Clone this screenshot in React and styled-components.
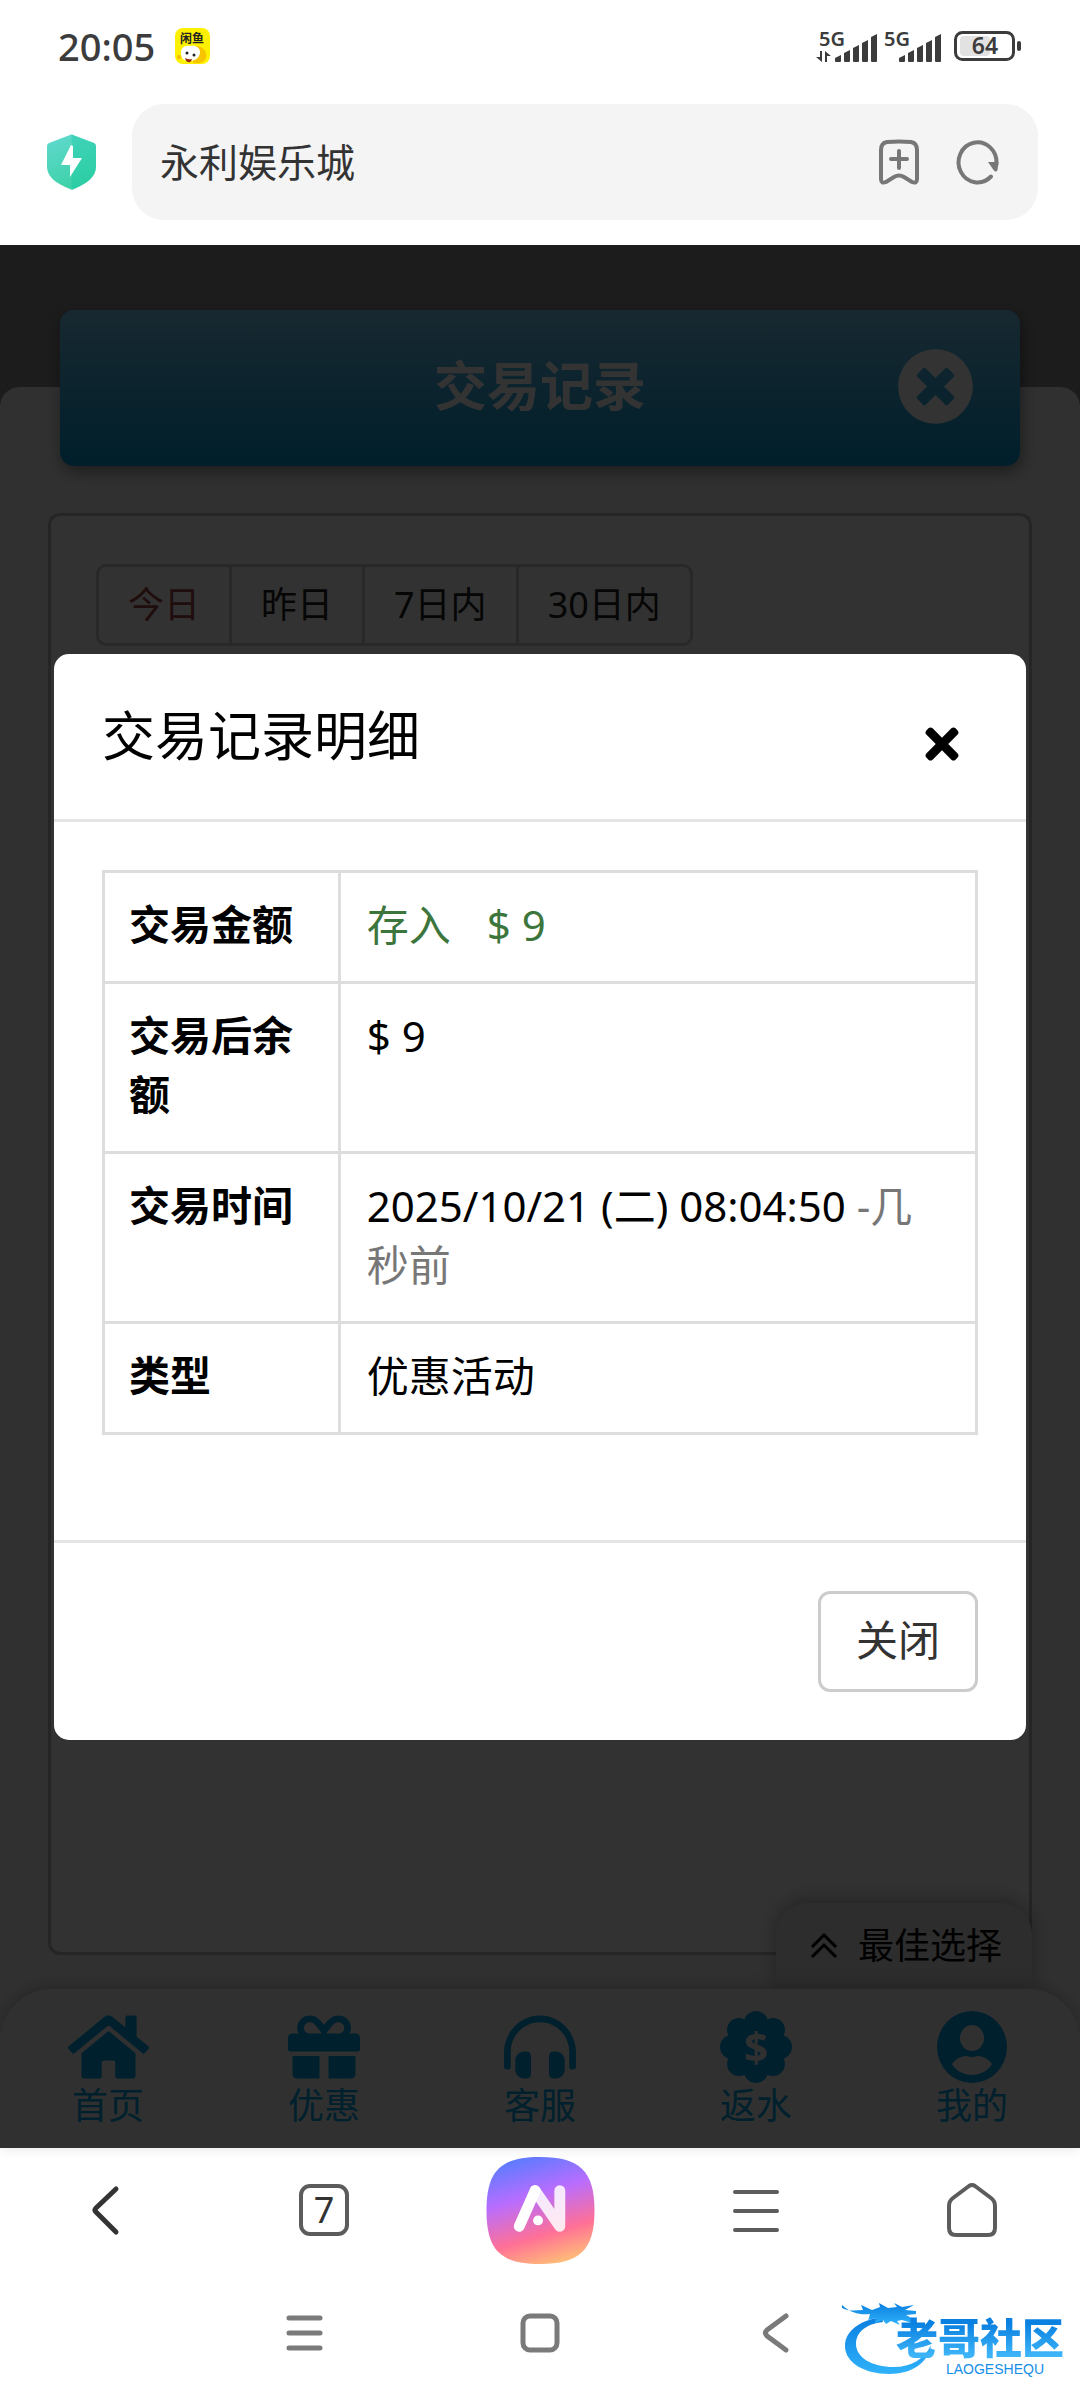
import React from "react";
import styled, { createGlobalStyle } from "styled-components";
import { FaGift, FaHeadphonesAlt, FaHome, FaTimes, FaTimesCircle } from "react-icons/fa";

const GlobalStyle = createGlobalStyle`
  * {
    box-sizing: border-box;
  }
  body {
    margin: 0;
    background: #fff;
    color: #000;
    font-family: "Noto Sans", "Noto Sans CJK SC", sans-serif;
    font-size: 42px;
  }
  button, input {
    font: inherit;
    color: inherit;
    margin: 0;
    padding: 0;
    border: 0;
    background: none;
  }
  svg {
    display: block;
    flex: none;
    overflow: visible;
  }
`;

const Screen = styled.div`
  display: flex;
  flex-direction: column;
  min-height: 100vh;
`;

/* phone status bar */

const StatusBar = styled.div`
  display: flex;
  align-items: center;
  height: 92px;
  padding: 0 58px;
  color: #3c3c3c;
`;

const Clock = styled.span`
  font-size: 38px;
  font-weight: 500;
  line-height: 48px;
  margin-right: 20px;
`;

const StatusIcons = styled.div`
  display: flex;
  align-items: center;
  gap: 6px;
  margin-left: auto;

  text {
    font-weight: 600;
    fill: #3c3c3c;
  }
`;

/* browser address bar */

const AddressRow = styled.div`
  display: flex;
  align-items: center;
  gap: 36px;
  padding: 12px 42px 25px 47px;
`;

const AddressBox = styled.div`
  flex: 1;
  display: flex;
  align-items: center;
  gap: 36px;
  height: 116px;
  padding: 0 38px 0 28px;
  border-radius: 32px;
  background: #f4f4f4;
  color: #777;
`;

const AddressInput = styled.input`
  flex: 1;
  min-width: 0;
  color: #333;
  font-size: 39px;
  line-height: 58px;
  outline: none;
`;

const IconButton = styled.button`
  display: flex;
  align-items: center;
  justify-content: center;
  cursor: pointer;
`;

/* web page */

const WebView = styled.main`
  position: relative;
  flex: 1;
  display: flex;
  flex-direction: column;
  background: #8c8c8c;
`;

const Sheet = styled.section`
  flex: 1;
  display: flex;
  flex-direction: column;
  margin-top: 142px;
  border-radius: 20px 20px 0 0;
  background: #f0f0f0;
`;

const TitleBar = styled.header`
  display: grid;
  grid-template-columns: 1fr auto 1fr;
  align-items: center;
  height: 156px;
  margin: -77px 60px 47px;
  padding: 0 46px 4px;
  border-radius: 14px;
  background: linear-gradient(#78c8f0, #009bd7);
  box-shadow: 2px 6px 16px rgba(0, 0, 0, 0.4);
  color: #fff;

  h1 {
    grid-column: 2;
    margin: 0;
    font-size: 53px;
    font-weight: 700;
    line-height: 70px;
  }
  button {
    justify-self: end;
    font-size: 77px;
  }
`;

const RecordBox = styled.div`
  flex: 1;
  margin: 0 48px 34px;
  padding: 48px 45px;
  border: 3px solid #b9b9b9;
  border-radius: 12px;
  background: #fafafa;
`;

const RangeTabs = styled.div`
  display: inline-flex;
  border: 3px solid #c8c8c8;
  border-radius: 10px;
`;

const RangeTab = styled.button`
  height: 76px;
  padding: 0 29px;
  font-size: 36px;
  line-height: 54px;
  color: ${(props) => (props.$active ? "#a04444" : "#222")};

  & + & {
    border-left: 3px solid #c8c8c8;
  }
`;

/* sits on the page, right above the bottom menu */
const BestPick = styled.button`
  position: absolute;
  right: 48px;
  bottom: 159px;
  display: flex;
  align-items: center;
  gap: 20px;
  height: 86px;
  padding: 0 30px 0 34px;
  border-radius: 32px 32px 0 0;
  background: #dedede;
  box-shadow: 0 -4px 20px rgba(0, 0, 0, 0.3);
  font-size: 36px;
  line-height: 54px;
`;

const SiteNav = styled.nav`
  position: relative;
  display: grid;
  grid-template-columns: repeat(5, 1fr);
  padding: 22px 0 19px;
  border-radius: 52px 52px 0 0;
  background: #f0f0f0;
  box-shadow: 0 -4px 16px rgba(0, 0, 0, 0.2);
`;

const SiteLink = styled.a`
  display: flex;
  flex-direction: column;
  align-items: center;
  color: #00a0e0;
  font-size: 36px;
  line-height: 46px;
  text-decoration: none;
`;

const HomeIcon = styled(FaHome)`
  width: 81px;
  height: 72px;
`;

/* record detail dialog */

const Backdrop = styled.div`
  position: absolute;
  inset: 0;
  display: flex;
  align-items: center;
  justify-content: center;
  background: rgba(0, 0, 0, 0.8);
`;

const Dialog = styled.div`
  width: 90%;
  border-radius: 15px;
  background: #fff;
`;

const DialogHead = styled.div`
  display: flex;
  justify-content: space-between;
  align-items: center;
  padding: 47px 60px 48px 48px;
  border-bottom: 3px solid #e5e5e5;

  h2 {
    margin: 0;
    font-size: 53px;
    font-weight: 400;
    line-height: 70px;
  }
  button {
    padding-top: 16px;
    font-size: 48px;
  }
`;

const DialogBody = styled.div`
  padding: 48px 48px 105px;
`;

const DialogFoot = styled.div`
  display: flex;
  justify-content: flex-end;
  padding: 48px;
  border-top: 3px solid #e5e5e5;
`;

const CloseButton = styled.button`
  padding: 16px 35px 20px;
  border: 3px solid #ccc;
  border-radius: 12px;
  color: #333;
  line-height: 59px;
  cursor: pointer;
`;

const DetailTable = styled.table`
  width: 100%;
  table-layout: fixed;
  border-collapse: collapse;
  line-height: 59px;

  th, td {
    padding: 22px 24px 27px;
    border: 3px solid #ddd;
    text-align: left;
    vertical-align: top;
  }
  th {
    width: 27%;
    font-size: 41px;
    font-weight: 700;
  }
  td {
    padding-left: 26px;
  }
`;

const Income = styled.span`
  color: #3c763d;

  b {
    margin-left: 36px;
    font-weight: 400;
  }
`;

const Muted = styled.span`
  color: #777;
`;

/* browser toolbar and system keys */

const Toolbar = styled.nav`
  display: grid;
  grid-template-columns: repeat(5, 1fr);
  height: 124px;
  color: #5c5c5c;
`;

const TabCount = styled.span`
  display: flex;
  align-items: center;
  justify-content: center;
  width: 50px;
  height: 52px;
  border: 4px solid #5c5c5c;
  border-radius: 11px;
  color: #333;
  font-size: 36px;
  line-height: 44px;
`;

const SystemKeys = styled.div`
  position: relative;
  display: flex;
  justify-content: center;
  gap: 196px;
  height: 128px;
  padding-bottom: 6px;
  color: #7a7a7a;
`;

const Watermark = styled.div`
  position: absolute;
  right: 16px;
  bottom: 24px;
  display: flex;
  flex-direction: column;
  align-items: flex-end;
  color: #168ee8;

  svg {
    position: absolute;
    right: 130px;
    bottom: 0;
  }
  strong {
    position: relative;
    font-size: 42px;
    font-weight: 900;
    line-height: 48px;
    color: transparent;
    background: linear-gradient(#0a80e0 20%, #3db4f8 85%);
    background-clip: text;
  }
  small {
    margin-right: 20px;
    font-family: "Liberation Sans", sans-serif;
    font-size: 14px;
    line-height: 14px;
  }
`;

function FishAppIcon() {
  return (
    <svg width="35" height="36" viewBox="0 0 35 36">
      <rect width="35" height="36" rx="8" fill="#fdf000" />
      <path d="M19 18c8-1 14 5 12 12-2 5-8 6-13 5z" fill="#f8c400" />
      <path d="M6 24c0-4 4-7 9-6 6-1 10 2 10 6 0 5-4 9-11 9S6 29 6 24z" fill="#fff" />
      <circle cx="12" cy="25" r="1.5" fill="#222" />
      <circle cx="19" cy="27" r="1.5" fill="#222" />
      <path d="M10 30q4 2 7 1-1 4-4 3-2 0-3-4z" fill="#9b2a10" />
      <circle cx="4" cy="29" r="2" fill="#f9b800" />
      <text x="17" y="15" fontSize="12" fontWeight="700" textAnchor="middle" fill="#222">闲鱼</text>
    </svg>
  );
}

function Signal({ arrows }) {
  const left = arrows ? 19 : 15;
  return (
    <svg width={left + 43} height="34" viewBox={`0 0 ${left + 43} 34`} fill="#3c3c3c">
      <text x={arrows ? 3 : 0} y="17" fontSize="20">5G</text>
      {arrows && <path d="M4 22h2v11l-6-5h4zM9 33V22l6 5h-4v6z" />}
      {[7, 12, 17, 22, 28].map((h, i) => (
        <path key={h} d={`M${left + i * 9} ${33 - h + 3}l6-3v${h - 1}q0 1-1 1h-4q-1 0-1-1z`} />
      ))}
    </svg>
  );
}

function Battery() {
  return (
    <svg width="68" height="30" viewBox="0 0 68 30">
      <rect x="6" y="5" width="30" height="20" rx="4" fill="#e2e2e2" />
      <rect x="1.5" y="1.5" width="58" height="27" rx="7" fill="none" stroke="#3c3c3c" strokeWidth="3" />
      <rect x="63" y="10" width="4" height="10" rx="2" fill="#3c3c3c" />
      <text x="31" y="23" fontSize="23" textAnchor="middle">64</text>
    </svg>
  );
}

function ShieldIcon() {
  return (
    <svg width="49" height="56" viewBox="0 0 49 56">
      <defs>
        <linearGradient id="shield" x1="0" y1="0" x2="0.4" y2="1">
          <stop offset="0" stopColor="#62d9d0" />
          <stop offset="1" stopColor="#3dd2a8" />
        </linearGradient>
      </defs>
      <path d="M23 1q1.500-1 3 0l21 8q2 1 2 3v21c0 10-10 17-22 22q-2 1-4 0C10 50 0 43 0 33V12q0-2 2-3z" fill="url(#shield)" />
      <path d="M24.500 0q1 0 1.500 1l21 8q2 1 2 3v21c0 10-10 17-22 22l-2.500 1z" fill="#12c8a0" opacity=".35" />
      <path d="M24 11L14 31h9v12l12-19h-9V12z" fill="#fff" />
    </svg>
  );
}

function BookmarkIcon() {
  return (
    <svg width="42" height="46" viewBox="0 0 42 46" fill="none" stroke="currentColor" strokeWidth="4" strokeLinecap="round" strokeLinejoin="round">
      <path d="M3 11q0-7 6-8 12-1 24 0 6 1 6 8v29q0 5-5 3l-8-5q-5-3-10 0l-8 5q-5 2-5-3z" />
      <path d="M21 12v17M13 20h16" />
    </svg>
  );
}

function ReloadIcon() {
  return (
    <svg width="44" height="46" viewBox="0 0 44 46">
      <path d="M35 37.500A19 20 0 1 1 40.500 25" fill="none" stroke="currentColor" strokeWidth="4" strokeLinecap="round" />
      <path d="M32 23h10.500l-1 8q-1.500 3-4 0z" fill="currentColor" />
    </svg>
  );
}

function ChevronsUp() {
  return (
    <svg width="28" height="28" viewBox="0 0 28 28" fill="none" stroke="currentColor" strokeWidth="3">
      <path d="M2 15L14 3l12 12M2 25l12-12 12 12" />
    </svg>
  );
}

function RebateIcon() {
  const lobes = [0, 45, 90, 135, 180, 225, 270, 315];
  return (
    <svg width="72" height="72" viewBox="0 0 72 72">
      <circle cx="36" cy="36" r="29" fill="currentColor" />
      {lobes.map((a) => (
        <circle key={a} cx="36" cy="12" r="12" fill="currentColor" transform={`rotate(${a} 36 36)`} />
      ))}
      <text x="36" y="51" fontSize="42" fontWeight="700" textAnchor="middle" fill="#f0f0f0">$</text>
    </svg>
  );
}

function UserIcon() {
  return (
    <svg width="70" height="72" viewBox="0 0 70 72">
      <ellipse cx="35" cy="36" rx="35" ry="36" fill="currentColor" />
      <ellipse cx="35" cy="27" rx="12" ry="13" fill="#f0f0f0" />
      <path d="M15 53c4-6 11-8 14-8q6 2 12 0c3 0 10 2 14 8-4 7-12 11-20 11s-16-4-20-11z" fill="#f0f0f0" />
    </svg>
  );
}

function AssistantIcon() {
  return (
    <svg width="109" height="107" viewBox="0 0 109 108">
      <defs>
        <linearGradient id="ai" x1="0.350" y1="0" x2="0.650" y2="1">
          <stop offset="0" stopColor="#5d7bff" />
          <stop offset="0.350" stopColor="#b86dff" />
          <stop offset="0.720" stopColor="#ff7096" />
          <stop offset="1" stopColor="#ffbd78" />
        </linearGradient>
      </defs>
      <path d="M54 0C94 0 109 14 109 54s-15 54-55 54S0 94 0 54 14 0 54 0z" fill="url(#ai)" />
      <g fill="none" stroke="#fff" strokeWidth="11" strokeLinecap="round" strokeLinejoin="round">
        <path d="M49 34l25 36V34" opacity=".85" />
        <path d="M33 70l16-36" />
      </g>
      <circle cx="52" cy="64" r="5" fill="#fff" />
    </svg>
  );
}

function DragonLogo() {
  return (
    <svg width="92" height="76" viewBox="0 0 92 76">
      <defs>
        <linearGradient id="dragon" x1="0" y1="0" x2="0" y2="1">
          <stop offset="0" stopColor="#0a7fe0" />
          <stop offset="1" stopColor="#2fb2fa" />
        </linearGradient>
      </defs>
      <g fill="url(#dragon)">
        <path d="M40 17C18 20 3 31 3 46c0 17 20 28 44 28 23 0 39-11 42-29-6 14-20 22-37 22-23 0-38-10-38-23 0-12 10-20 27-22z" />
        <path d="M0 8c8 4 14 2 21 2l-2-5 11 5 8-3-1-4 9 5 9-1-3-4 8 4 12-2-9 5 11 1v3l-10 1 9 5-3 3-10-3-5 1 3 4-9-4-5 3-3-4-8 3 1-5-8 2c2-3 1-4 2-6-9 1-18 0-28-9z" />
      </g>
    </svg>
  );
}

const stroke = { fill: "none", stroke: "currentColor", strokeLinecap: "round", strokeLinejoin: "round" };

const ranges = ["今日", "昨日", "7日内", "30日内"];

const siteLinks = [
  { label: "首页", icon: <HomeIcon /> },
  { label: "优惠", icon: <FaGift size={72} /> },
  { label: "客服", icon: <FaHeadphonesAlt size={72} /> },
  { label: "返水", icon: <RebateIcon /> },
  { label: "我的", icon: <UserIcon /> },
];

function RecordDialog() {
  return (
    <Backdrop>
      <Dialog role="dialog" aria-labelledby="detail-title">
        <DialogHead>
          <h2 id="detail-title">交易记录明细</h2>
          <IconButton aria-label="关闭"><FaTimes /></IconButton>
        </DialogHead>
        <DialogBody>
          <DetailTable>
            <tbody>
              <tr>
                <th scope="row">交易金额</th>
                <td><Income>存入<b>$ 9</b></Income></td>
              </tr>
              <tr>
                <th scope="row">交易后余额</th>
                <td>$ 9</td>
              </tr>
              <tr>
                <th scope="row">交易时间</th>
                <td>2025/10/21 (二) 08:04:50 <Muted>-几秒前</Muted></td>
              </tr>
              <tr>
                <th scope="row">类型</th>
                <td>优惠活动</td>
              </tr>
            </tbody>
          </DetailTable>
        </DialogBody>
        <DialogFoot>
          <CloseButton>关闭</CloseButton>
        </DialogFoot>
      </Dialog>
    </Backdrop>
  );
}

function App() {
  return (
    <Screen>
      <GlobalStyle />
      <StatusBar>
        <Clock>20:05</Clock>
        <FishAppIcon />
        <StatusIcons>
          <Signal arrows />
          <Signal />
          <span />
          <Battery />
        </StatusIcons>
      </StatusBar>

      <AddressRow>
        <ShieldIcon />
        <AddressBox>
          <AddressInput aria-label="网址" defaultValue="永利娱乐城" />
          <IconButton aria-label="收藏"><BookmarkIcon /></IconButton>
          <IconButton aria-label="刷新"><ReloadIcon /></IconButton>
        </AddressBox>
      </AddressRow>

      <WebView>
        <Sheet>
          <TitleBar>
            <h1>交易记录</h1>
            <IconButton aria-label="返回"><FaTimesCircle /></IconButton>
          </TitleBar>
          <RecordBox>
            <RangeTabs>
              {ranges.map((range, i) => (
                <RangeTab key={range} $active={i === 0}>{range}</RangeTab>
              ))}
            </RangeTabs>
          </RecordBox>
          <BestPick><ChevronsUp />最佳选择</BestPick>
          <SiteNav>
            {siteLinks.map(({ label, icon }) => (
              <SiteLink key={label} href="#">{icon}{label}</SiteLink>
            ))}
          </SiteNav>
        </Sheet>
        <RecordDialog />
      </WebView>

      <Toolbar>
        <IconButton aria-label="后退">
          <svg width="32" height="52" viewBox="0 0 32 52" {...stroke} stroke="#333" strokeWidth="5">
            <path d="M24 5L4 24q-2 2 0 4l20 20" />
          </svg>
        </IconButton>
        <IconButton aria-label="标签页"><TabCount>7</TabCount></IconButton>
        <IconButton aria-label="助手"><AssistantIcon /></IconButton>
        <IconButton aria-label="菜单">
          <svg width="46" height="46" viewBox="0 0 46 46" {...stroke} strokeWidth="4">
            <path d="M2 5h42M2 24h42M2 43h42" />
          </svg>
        </IconButton>
        <IconButton aria-label="主页">
          <svg width="50" height="54" viewBox="0 0 50 54" {...stroke} strokeWidth="4">
            <path d="M22 3q3-2 6 0l16 12q4 3 4 8v22q0 7-7 7H9q-7 0-7-7V23q0-5 4-8z" />
          </svg>
        </IconButton>
      </Toolbar>

      <SystemKeys>
        <IconButton aria-label="最近任务">
          <svg width="40" height="38" viewBox="0 0 40 38" {...stroke} strokeWidth="5">
            <path d="M5 4h31M5 19h31M5 34h31" />
          </svg>
        </IconButton>
        <IconButton aria-label="桌面">
          <svg width="40" height="40" viewBox="0 0 40 40" {...stroke} strokeWidth="5">
            <rect x="3" y="3" width="34" height="34" rx="7" />
          </svg>
        </IconButton>
        <IconButton aria-label="返回上一级">
          <svg width="40" height="40" viewBox="0 0 40 40" {...stroke} strokeWidth="5">
            <path d="M30 3L11 17q-3 3 0 6l19 14" />
          </svg>
        </IconButton>
        <Watermark>
          <DragonLogo />
          <strong>老哥社区</strong>
          <small>LAOGESHEQU</small>
        </Watermark>
      </SystemKeys>
    </Screen>
  );
}

export default App;
